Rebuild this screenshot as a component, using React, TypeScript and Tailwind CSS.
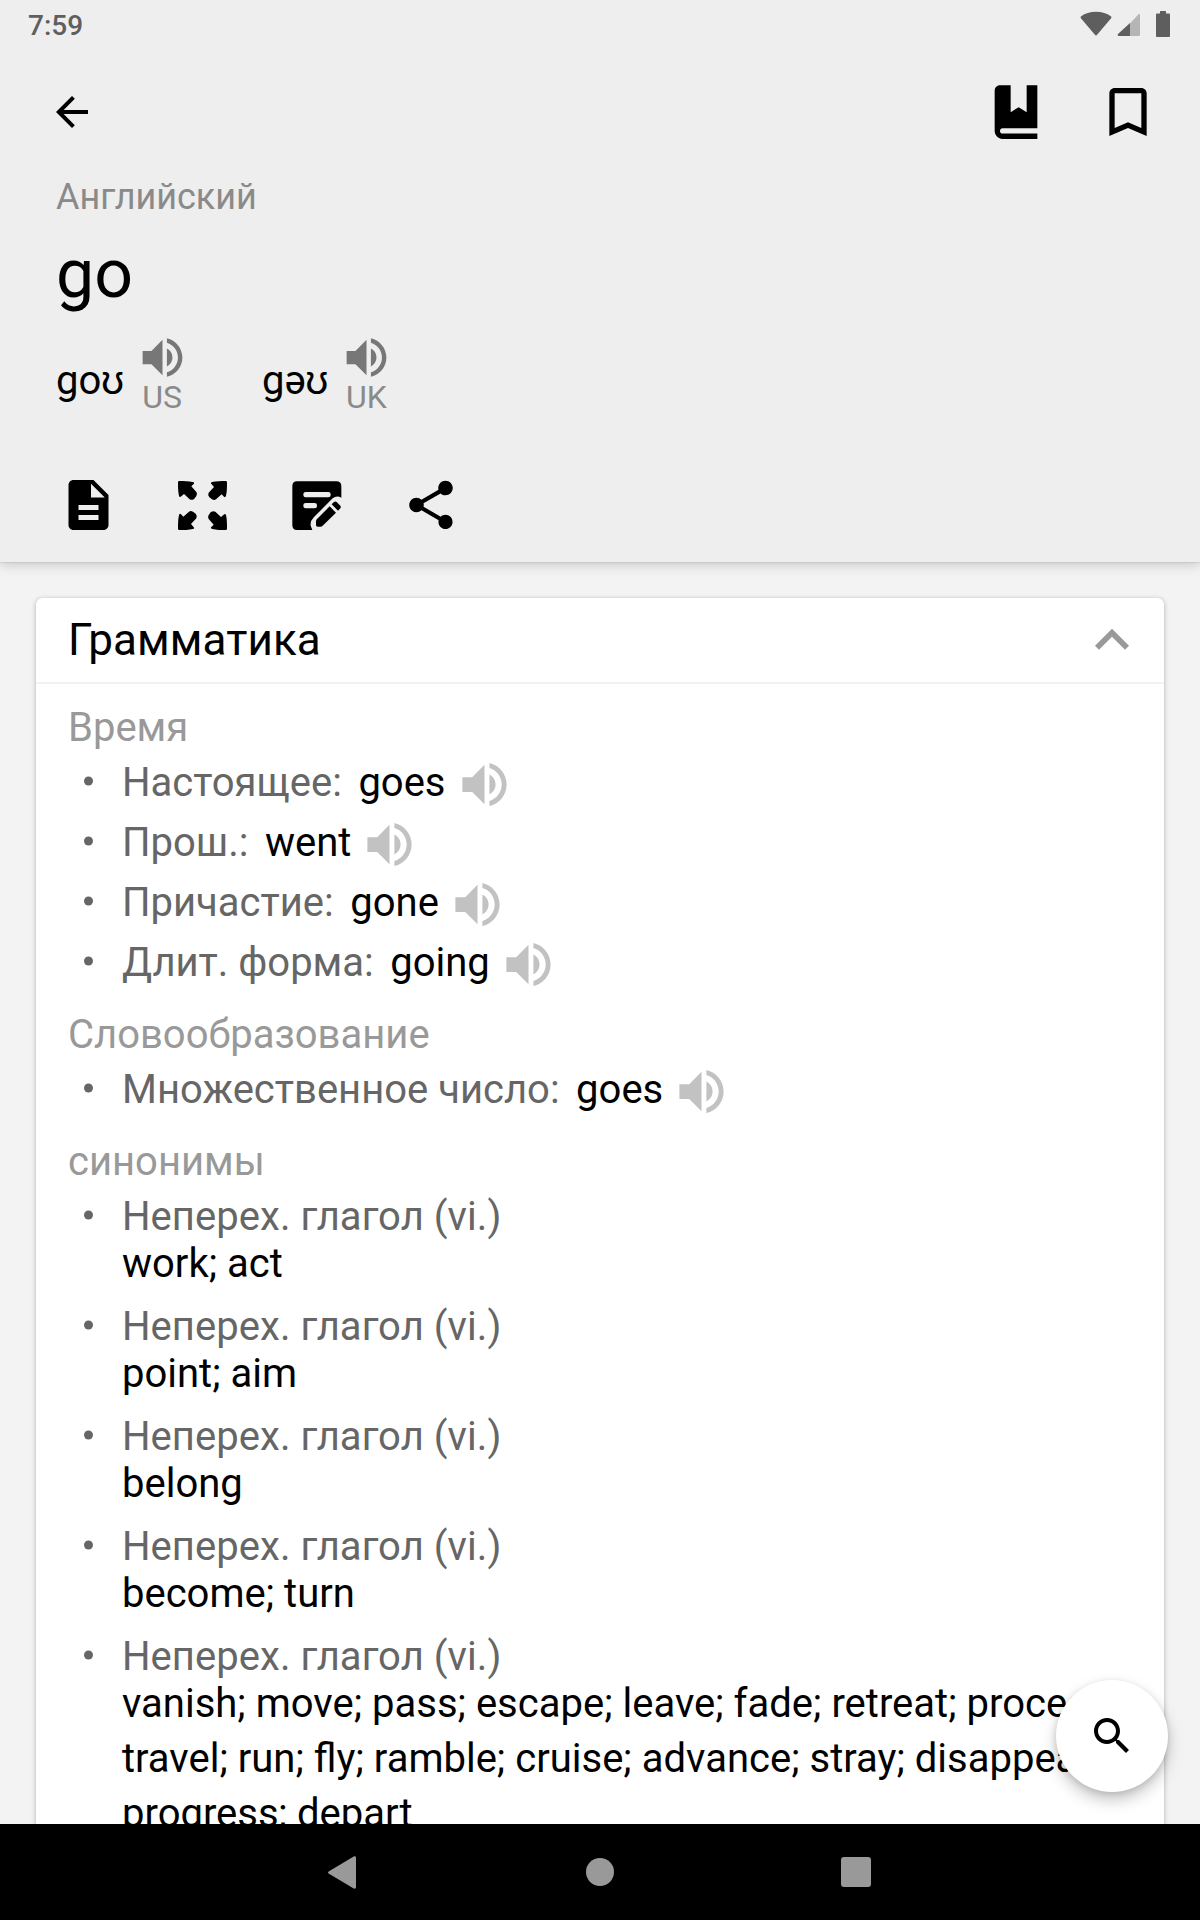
import React from "react";

const VOLUME =
  "M3 9v6h4l5 5V4L7 9H3zm13.5 3c0-1.77-1.02-3.29-2.5-4.03v8.05c1.48-.73 2.5-2.25 2.5-4.02zM14 3.23v2.06c2.89.86 5 3.54 5 6.71s-2.11 5.85-5 6.71v2.06c4.01-.91 7-4.49 7-8.77s-2.99-7.86-7-8.77z";

function Icon({ d, className }: { d: string; className: string }) {
  return (
    <svg viewBox="0 0 24 24" fill="currentColor" className={className}>
      <path d={d} />
    </svg>
  );
}

function StatusBar() {
  return (
    <div className="flex h-12 shrink-0 justify-between pl-[28px] pr-[30px]">
      <span className="mt-[9px] text-[28px] leading-[33px] font-medium text-[#5f5f5f]">7:59</span>
      <div className="flex pt-[10px]">
        <svg viewBox="0 0 32 28" className="h-7 w-8 text-[#5e5e5e]" fill="currentColor">
          <path d="M1.2 6.2C5 3.200 10 1.700 16 1.700s11 1.500 14.800 4.500c.8.600.8 1.400.3 2.100L16.900 25c-.5.600-1.300.600-1.800 0L.9 8.300c-.5-.7-.4-1.500.3-2.100z" />
        </svg>
        <svg viewBox="0 0 24 28" className="ml-[5px] h-7 w-6">
          <path d="M23 5v19.500a1.500 1.500 0 0 1-1.500 1.500H12V14.500L21.300 4.500c.7-.7 1.700-.4 1.700.5z" fill="#b5b5b5" />
          <path d="M13 13V26H2c-1.400 0-1.800-1-1-1.900z" fill="#5e5e5e" />
        </svg>
        <svg viewBox="0 0 14 28" className="ml-[15px] h-7 w-[14px]" fill="#5e5e5e">
          <path d="M4.500 1h5c.4 0 .5.200.5.500V3.500h2.700c.8 0 1.300.5 1.300 1.300v20.900c0 .8-.5 1.300-1.300 1.300H1.300C.5 27 0 26.500 0 25.700V4.800C0 4 .5 3.500 1.300 3.500H4v-2c0-.3.1-.5.5-.5z" />
        </svg>
      </div>
    </div>
  );
}

function Pronunciation({ ipa, region }: { ipa: string; region: string }) {
  return (
    <div className="flex gap-[11px]">
      <span className="text-[40px] leading-[99px] whitespace-nowrap">{ipa}</span>
      <div className="flex w-[54px] flex-col items-center">
        <Icon d={VOLUME} className="h-[53px] w-[53px] shrink-0 text-[#777]" />
        <span className="text-[32px] leading-[26px] text-[#8a8a8a]">{region}</span>
      </div>
    </div>
  );
}

function ExpandArrows() {
  return (
    <svg viewBox="0 0 147 147" className="h-[49px] w-[49px]" fill="currentColor">
      {[0, 90, 180, 270].map((a) => (
        <path
          key={a}
          transform={`rotate(${a} 73.5 73.5)`}
          d="M4 0C18 0 32 0 44 3Q51 5 47 9L40 16L55 33Q59 38 55 45L49 53Q42 59 35 55L18 39L10 46Q5 51 3 45C0 32 0 18 0 4Q0 0 4 0z"
        />
      ))}
    </svg>
  );
}

function EditNote() {
  return (
    <svg viewBox="0 0 150 147" className="h-[49px] w-[50px]">
      <path
        fill="currentColor"
        d="M15 1H133Q148 1 148 16V50Q134 42 122 52L66 108Q54 120 56 134L61 147H15Q1 147 1 132V16Q1 1 15 1z"
      />
      <rect x="34" y="33" width="82" height="16" rx="7" fill="#eee" />
      <rect x="34" y="66" width="41" height="16" rx="7" fill="#eee" />
      <path
        fill="currentColor"
        d="M113 76L132 95L92 134Q89 137 85 137H77Q72 137 72 132V121Q72 117 75 114zM119 70L126 63Q130 60 134 63L145 74Q148 78 145 82L138 89z"
      />
    </svg>
  );
}

function Header() {
  return (
    <header className="relative z-10 flex h-[562px] shrink-0 flex-col bg-[#eee] shadow-[0_2px_12px_rgba(0,0,0,0.2),0_0_2px_rgba(0,0,0,0.18)]">
      <StatusBar />
      <div className="flex h-32 shrink-0 items-center pr-10 pl-12">
        <Icon
          d="M20 11H7.830l5.590-5.590L12 4l-8 8 8 8 1.410-1.410L7.830 13H20v-2z"
          className="mr-auto h-12 w-12"
        />
        <Icon
          d="M6 2C4.900 2 4 2.900 4 4v15c0 1.700 1.300 3.100 3 3.100H20v-2H7c-.6 0-1-.4-1-1s.4-1 1-1H20V2h-4v10.100l-3-1.900-3 1.900V2H6z"
          className="h-16 w-16"
        />
        <Icon
          d="M17 3H7c-1.100 0-1.990.9-1.990 2L5 21l7-3 7 3V5c0-1.100-.9-2-2-2zm0 15l-5-2.180L7 18V5h10v13z"
          className="ml-12 h-16 w-16"
        />
      </div>
      <div className="h-[41px] shrink-0 pl-14 text-[36px] leading-[43px] text-[#8a8a8a]">Английский</div>
      <h1 className="h-[114px] shrink-0 pl-14 text-[68px] leading-[114px] font-normal">go</h1>
      <div className="flex h-[97px] shrink-0 gap-[73px] pl-14">
        <Pronunciation ipa="goʊ" region="US" />
        <Pronunciation ipa="gəʊ" region="UK" />
      </div>
      <div className="mt-5 flex flex-1 items-center pl-[31px]">
        <div className="flex w-[114px] justify-center">
          <Icon
            d="M14 2H6c-1.100 0-1.990.9-1.990 2L4 20c0 1.100.89 2 1.990 2H18c1.100 0 2-.9 2-2V8l-6-6zm2 16H8v-2h8v2zm0-4H8v-2h8v2zm-3-5V3.500L18.500 9H13z"
            className="h-[60px] w-[61px]"
          />
        </div>
        <div className="flex w-[115px] justify-center">
          <ExpandArrows />
        </div>
        <div className="flex w-[114px] justify-center">
          <EditNote />
        </div>
        <div className="flex w-[114px] justify-center">
          <Icon
            d="M18 16.080c-.76 0-1.440.3-1.960.77L8.910 12.700c.05-.23.09-.46.09-.7s-.04-.47-.09-.7l7.050-4.110c.54.5 1.250.81 2.040.81 1.660 0 3-1.340 3-3s-1.340-3-3-3-3 1.340-3 3c0 .24.040.47.090.7L8.040 9.810C7.500 9.310 6.790 9 6 9c-1.660 0-3 1.340-3 3s1.340 3 3 3c.79 0 1.500-.31 2.040-.81l7.120 4.160c-.05.21-.08.43-.08.65 0 1.610 1.310 2.920 2.920 2.920s2.920-1.310 2.920-2.920-1.310-2.920-2.920-2.920z"
            className="h-[58px] w-[58px]"
          />
        </div>
      </div>
    </header>
  );
}

function Bullet() {
  return <span className="mr-[29.5px] h-[9px] w-[9px] shrink-0 -translate-y-[1.500px] rounded-full bg-[#666]" />;
}

function Heading({ children }: { children: React.ReactNode }) {
  return <h3 className="h-[50px] pl-8 text-[40px] leading-[52px] font-normal text-[#999]">{children}</h3>;
}

function FormRow({ label, word }: { label: string; word: string }) {
  return (
    <li className="flex h-[60px] items-center pl-[47.5px] text-[40px] leading-[60px]">
      <Bullet />
      <span className="pt-[2px] text-[#666]">{label}:</span>
      <span className="ml-[16.5px] pt-[2px]">{word}</span>
      <Icon d={VOLUME} className="mt-[4px] ml-[9px] h-[59px] w-[59px] text-[#c2c2c2]" />
    </li>
  );
}

const tenses = [
  { label: "Настоящее", word: "goes" },
  { label: "Прош.", word: "went" },
  { label: "Причастие", word: "gone" },
  { label: "Длит. форма", word: "going" },
];

const synonyms = [
  ["work; act"],
  ["point; aim"],
  ["belong"],
  ["become; turn"],
  [
    "vanish; move; pass; escape; leave; fade; retreat; proceed;",
    "travel; run; fly; ramble; cruise; advance; stray; disappear;",
    "progress; depart",
  ],
];

function GrammarCard() {
  return (
    <section className="mx-9 mt-9 h-[1400px] rounded-[6px] bg-white shadow-[0_1px_5px_rgba(0,0,0,0.25),0_0_1px_rgba(0,0,0,0.15)]">
      <div className="flex h-[86px] items-center justify-between border-b-2 border-[#f2f2f2] pr-[18px] pl-8">
        <h2 className="h-[84px] text-[44px] leading-[84px] font-normal tracking-[0.1px]">Грамматика</h2>
        <Icon d="M12 8l-6 6 1.410 1.410L12 10.830l4.590 4.580L18 14z" className="h-[68px] w-[68px] text-[#999]" />
      </div>
      <div className="pt-[18px]">
        <Heading>Время</Heading>
        <ul className="mb-[17px]">
          {tenses.map((t) => (
            <FormRow key={t.label} {...t} />
          ))}
        </ul>
        <Heading>Словообразование</Heading>
        <ul className="mb-[17px]">
          <FormRow label="Множественное число" word="goes" />
        </ul>
        <Heading>синонимы</Heading>
        <ul className="flex flex-col gap-[15px] pt-[10px] pl-[47.5px] text-[40px]">
          {synonyms.map((lines) => (
            <li key={lines[0]}>
              <div className="flex h-10 items-center leading-[40px] tracking-[0.060px] text-[#666]">
                <Bullet />
                <span className="pt-[2px]">Неперех. глагол (vi.)</span>
              </div>
              <div className="pl-[38.5px] leading-[55px]">
                {lines.map((line) => (
                  <div key={line} className="whitespace-nowrap">
                    {line}
                  </div>
                ))}
              </div>
            </li>
          ))}
        </ul>
      </div>
    </section>
  );
}

function NavBar() {
  return (
    <nav className="relative z-10 grid h-24 shrink-0 grid-cols-[256px_256px_256px] place-items-center justify-center bg-black text-[#999]">
      <svg viewBox="0 0 28 33" className="h-[33px] w-7 -translate-x-[2px]" fill="currentColor">
        <path d="M1 15.200 25.300.700C26.900-.2 28 .4 28 2v29c0 1.600-1.100 2.200-2.700 1.300L1 17.800c-1.300-.8-1.300-1.800 0-2.600z" />
      </svg>
      <span className="h-7 w-7 rounded-full bg-[#999]" />
      <span className="h-[30px] w-[30px] rounded-[3px] bg-[#999]" />
    </nav>
  );
}

export default function App() {
  return (
    <div className="relative flex h-[1920px] w-[1200px] flex-col overflow-hidden bg-[#f3f3f3] font-['Roboto','Liberation_Sans',sans-serif] text-black">
      <Header />
      <main className="min-h-0 flex-1 overflow-hidden">
        <GrammarCard />
      </main>
      <NavBar />
      <button className="absolute right-8 bottom-32 flex h-28 w-28 items-center justify-center rounded-full bg-white shadow-[0_8px_16px_rgba(0,0,0,0.22),0_2px_6px_rgba(0,0,0,0.12)]">
        <Icon
          d="M15.500 14h-.79l-.28-.27C15.410 12.590 16 11.110 16 9.500 16 5.910 13.090 3 9.500 3S3 5.910 3 9.500 5.910 16 9.500 16c1.610 0 3.090-.59 4.230-1.570l.27.28v.79l5 4.990L20.490 19l-4.990-5zm-6 0C7.010 14 5 11.990 5 9.500S7.010 5 9.500 5 14 7.010 14 9.500 11.990 14 9.500 14z"
          className="h-12 w-12"
        />
      </button>
    </div>
  );
}
